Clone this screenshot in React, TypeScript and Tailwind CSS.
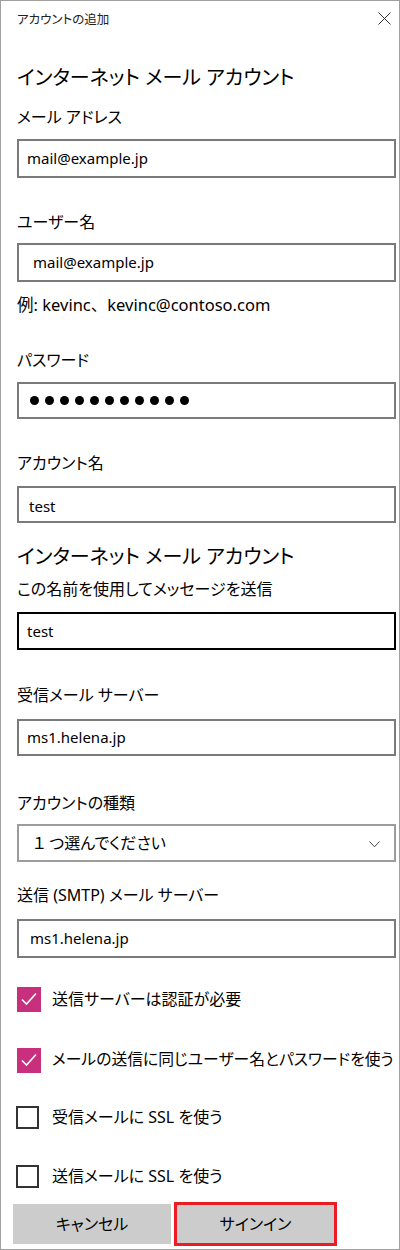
import React from 'react';

const FONT = { fontFamily: '"Noto Sans", "Noto Sans CJK JP", sans-serif' };

function Label({ children, className = '' }: { children: React.ReactNode; className?: string }) {
  return <div className={`h-[24px] leading-[24px] text-[16px] text-black whitespace-nowrap ${className}`}>{children}</div>;
}

function Field({ value, className = '', border = 'border-[#7a7a7a]', pad = 'pl-[8px]' }: { value: string; className?: string; border?: string; pad?: string }) {
  return (
    <div className={`w-[379px] border-2 ${border} ${pad} flex items-center text-[15px] text-black ${className}`}>
      {value}
    </div>
  );
}

function Check({ checked, label, className = '', textSize = 'text-[16px]' }: { checked: boolean; label: string; className?: string; textSize?: string }) {
  return (
    <div className={`flex items-center h-[24px] ${className}`}>
      {checked ? (
        <div className="w-[24px] h-[25px] bg-[#c8307d] flex items-center justify-center shrink-0">
          <svg width="16" height="14" viewBox="0 0 16 14" fill="none">
            <path d="M1 7.5 L5.5 12 L15 1.5" stroke="white" strokeWidth="1.6" />
          </svg>
        </div>
      ) : (
        <div className="w-[23px] h-[23px] border-2 border-[#333] -ml-px shrink-0" />
      )}
      <span className={`${textSize} text-black whitespace-nowrap ${checked ? 'ml-[11px]' : 'ml-[13px]'}`}>{label}</span>
    </div>
  );
}

export default function App() {
  return (
    <div style={FONT} className="w-[400px] h-[1250px] bg-white border border-[#a0a0a0] overflow-hidden [font-feature-settings:'palt']">
      <div className="pl-[16px] pr-[3px]">
        {/* title bar */}
        <div className="h-[39px] flex items-center justify-between">
          <span className="text-[12.5px] text-[#222]">アカウントの追加</span>
          <svg width="13" height="13" viewBox="0 0 13 13" className="mr-[5px] -mt-[4px]">
            <path d="M0.5 0.5 L12.5 12.5 M12.5 0.5 L0.5 12.5" stroke="#333" strokeWidth="1" />
          </svg>
        </div>

        <div className="mt-[24px] h-[28px] leading-[28px] text-[20px] text-black whitespace-nowrap">インターネット メール アカウント</div>
        <Label className="mt-[13px]">メール アドレス</Label>
        <Field value="mail@example.jp" className="mt-[10px] h-[39px]" />

        <Label className="mt-[32px]">ユーザー名</Label>
        <Field value="mail@example.jp" className="mt-[9px] h-[39px]" pad="pl-[14px]" />
        <div className="mt-[11px] h-[24px] leading-[24px] text-[16.5px] text-black whitespace-nowrap [font-feature-settings:normal]">例: kevinc、kevinc@contoso.com</div>

        <Label className="mt-[31px]">パスワード</Label>
        <div className="mt-[10px] h-[37px] w-[379px] border-2 border-[#7a7a7a] pl-[11px] flex items-center gap-[6px]">
          {Array.from({ length: 11 }).map((_, i) => (
            <span key={i} className="w-[9px] h-[9px] rounded-full bg-black" />
          ))}
        </div>

        <Label className="mt-[32px]">アカウント名</Label>
        <Field value="test" className="mt-[11px] h-[37px] items-end pb-[4px]" pad="pl-[10px]" />

        <div className="mt-[20px] h-[28px] leading-[28px] text-[20px] text-black whitespace-nowrap">インターネット メール アカウント</div>
        <Label className="mt-[6px]">この名前を使用してメッセージを送信</Label>
        <Field value="test" className="mt-[11px] h-[38px]" border="border-black" />

        <Label className="mt-[33px]">受信メール サーバー</Label>
        <Field value="ms1.helena.jp" className="mt-[12px] h-[37px]" />

        <Label className="mt-[35px]">アカウントの種類</Label>
        <div className="mt-[9px] h-[38px] w-[379px] border-2 border-[#9c9c9c] pl-[14px] pr-[14px] flex items-center justify-between text-[16px] text-black">
          <span>１ つ選んでください</span>
          <svg width="11" height="7" viewBox="0 0 11 7" className="mt-[3px]">
            <path d="M0.5 0.5 L5.5 5.8 L10.5 0.5" stroke="#444" strokeWidth="1" fill="none" />
          </svg>
        </div>

        <Label className="mt-[21px]">送信 (SMTP) メール サーバー</Label>
        <Field value="ms1.helena.jp" className="mt-[12px] h-[39px]" pad="pl-[11px]" />

        <Check checked label="送信サーバーは認証が必要" className="mt-[29px]" />
        <Check checked label="メールの送信に同じユーザー名とパスワードを使う" className="mt-[37px]" textSize="text-[15.8px]" />
        <Check checked={false} label="受信メールに SSL を使う" className="mt-[33px]" />
        <Check checked={false} label="送信メールに SSL を使う" className="mt-[35px]" />

        <div className="mt-[14px] -ml-[4px] flex items-center gap-[3px]">
          <button className="w-[158px] h-[40px] bg-[#cccccc] text-[16px] text-black">キャンセル</button>
          <button className="w-[163px] h-[44px] bg-[#cccccc] border-[3px] border-[#ec1c24] text-[16px] text-black">サインイン</button>
        </div>
      </div>
    </div>
  );
}
